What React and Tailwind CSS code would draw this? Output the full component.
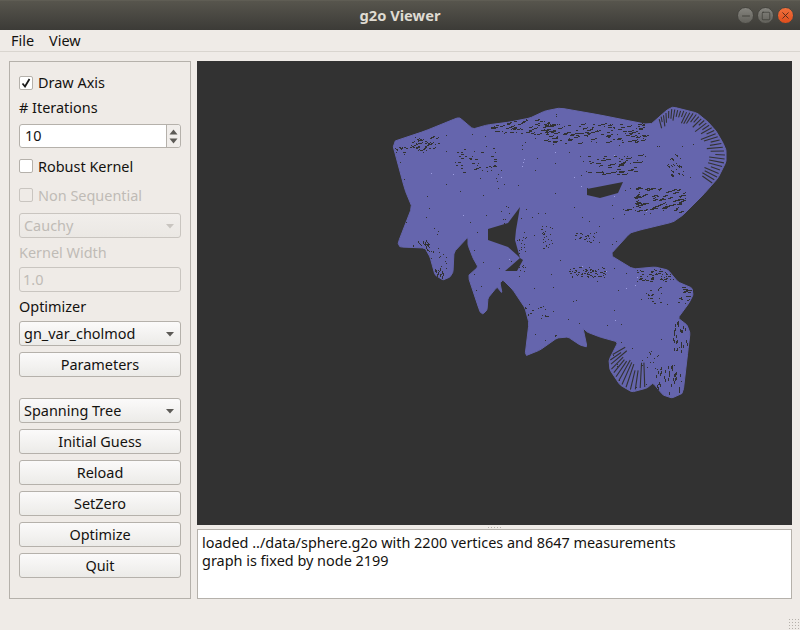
import { Minus, Square, X } from "lucide-react";

const font = "font-['Noto_Sans','Open_Sans',sans-serif] text-[14.45px]";

// graph outline traced from the reference, in page coordinates
const traced = [
  [392, 142], [425, 131], [457, 118], [460, 118], [473, 129], [487, 125], [510, 122], [530, 118], [545, 111], [560, 108],
  [600, 115], [650, 125], [667, 110], [673, 107], [697, 113], [708, 122], [716, 131], [723, 143], [726, 150], [726, 162],
  [718, 178], [703, 195], [683, 215], [673, 222], [640, 230], [630, 233], [610, 255], [633, 269], [655, 267], [668, 270],
  [678, 282], [692, 288], [693, 295], [689, 303], [678, 318], [687, 325], [690, 333], [688, 350], [683, 393], [672, 398],
  [663, 395], [653, 383], [647, 388], [632, 392], [620, 385], [610, 370], [609, 360], [618, 342], [600, 337], [587, 332],
  [583, 328], [587, 347], [580, 345], [568, 337], [557, 338], [540, 350], [525, 356], [529, 323], [525, 308], [513, 290],
  [503, 280], [500, 283], [502, 293], [497, 287], [488, 298], [487, 310], [483, 314], [480, 312], [468, 276], [478, 267],
  [473, 258], [468, 245], [468, 237], [454, 252], [453, 272], [450, 277], [443, 280], [435, 275], [430, 257], [425, 248],
  [400, 247], [398, 243], [412, 207], [405, 190],
];
const holes = [
  [[520, 207], [508, 223], [488, 229], [488, 240], [508, 247], [517, 255], [520, 258], [515, 240], [516, 230]],
  [[520, 258], [505, 271], [517, 271], [523, 260]],
  [[587, 189], [623, 182], [618, 193], [600, 198], [587, 195]],
];

// cut the corners a bit so the edge reads as a curve
function smooth(poly, k = 0.1) {
  return poly.flatMap(([x, y], i) => {
    const [nx, ny] = poly[(i + 1) % poly.length];
    return [
      [x + (nx - x) * k, y + (ny - y) * k],
      [x + (nx - x) * (1 - k), y + (ny - y) * (1 - k)],
    ];
  });
}
const outline = smooth(traced);

function inPoly(poly, x, y) {
  let inside = false;
  for (let i = 0, j = poly.length - 1; i < poly.length; j = i++) {
    const [xi, yi] = poly[i];
    const [xj, yj] = poly[j];
    if (yi > y !== yj > y && x < ((xj - xi) * (y - yi)) / (yj - yi) + xi) inside = !inside;
  }
  return inside;
}
const onGraph = (x, y) => inPoly(outline, x, y) && !holes.some((h) => inPoly(h, x, y));

function makeRandom(seed) {
  return () => {
    seed = (seed + 0x6d2b79f5) | 0;
    let t = Math.imul(seed ^ (seed >>> 15), 1 | seed);
    t = (t + Math.imul(t ^ (t >>> 7), 61 | t)) ^ t;
    return ((t ^ (t >>> 14)) >>> 0) / 4294967296;
  };
}

// [cx, cy, rx, ry, count, max dash length, slope]
const clusters = [
  [593, 133, 50, 10, 110, 6, -0.12], [523, 127, 32, 7, 70, 5, -0.15], [423, 143, 15, 7, 36, 4, -0.3], [400, 150, 6, 5, 14, 2, 0],
  [477, 160, 22, 12, 40, 3, 0.1], [613, 165, 26, 10, 55, 6, -0.1], [653, 200, 30, 12, 70, 7, -0.2], [587, 272, 18, 5, 60, 2, 0],
  [657, 275, 20, 6, 50, 3, 0], [653, 295, 8, 8, 18, 2, 0], [547, 237, 6, 12, 28, 1, 0], [587, 237, 12, 5, 20, 3, 0.3],
  [505, 215, 6, 10, 8, 1, 0], [536, 310, 12, 6, 14, 2, 0], [675, 165, 8, 12, 22, 3, 0.6], [680, 335, 8, 15, 30, 1, 2],
  [686, 296, 8, 12, 24, 5, -0.1], [420, 244, 9, 4, 12, 4, 1.2], [437, 262, 10, 14, 24, 1, 0], [438, 272, 8, 5, 14, 1, 2],
  [522, 250, 4, 22, 24, 1, 0], [668, 378, 12, 14, 34, 1, 2], [650, 360, 8, 10, 12, 1, 0],
];
// [hub x, hub y, from angle, to angle, count, start fraction]
const fans = [
  [668, 152, -105, 35, 36, 0.66], [643, 337, 88, 150, 13, 0.48],
];

function buildSpeckle() {
  const rand = makeRandom(2199);
  let dark = "";
  let spokes = "";
  let light = "";
  const add = (x, y, len, slope) => {
    if (onGraph(x, y) && onGraph(x + len, y + len * slope)) dark += `M${x} ${y}L${x + len} ${y + len * slope}`;
  };
  for (const [cx, cy, rx, ry, count, max, slope] of clusters) {
    for (let i = 0; i < count; i++) {
      const x = Math.round(cx + (rand() * 2 - 1) * rx);
      const y = Math.round(cy + (rand() * 2 - 1) * ry);
      add(x, y + 0.5, 1 + Math.floor(rand() * max), slope);
    }
  }
  for (let i = 0; i < 260; i++) {
    add(Math.round(395 + rand() * 300), Math.round(110 + rand() * 285) + 0.5, 1, 0);
  }
  for (let i = 0; i < 22; i++) {
    const x = Math.round(430 + rand() * 240);
    const y = Math.round(150 + rand() * 200);
    if (onGraph(x, y)) light += `M${x} ${y + 0.5}h1`;
  }
  for (const [hx, hy, from, to, count, start] of fans) {
    for (let i = 0; i < count; i++) {
      const a = ((from + ((to - from) * i) / (count - 1)) * Math.PI) / 180;
      let r = 1;
      while (onGraph(hx + Math.cos(a) * r, hy + Math.sin(a) * r) && r < 80) r++;
      const r1 = r * (start + rand() * 0.16);
      const r2 = r - 2;
      spokes += `M${hx + Math.cos(a) * r1} ${hy + Math.sin(a) * r1}L${hx + Math.cos(a) * r2} ${hy + Math.sin(a) * r2}`;
    }
  }
  return { dark, spokes, light };
}

const toPath = (poly) => "M" + poly.map((p) => p.join(" ")).join("L") + "Z";
const speckle = buildSpeckle();

function GraphView() {
  return (
    <div className="h-[464px] bg-[#323232]">
      <svg width="595" height="464" viewBox="197 61 595 464" className="block">
        <path d={toPath(outline)} fill="#6565ad" stroke="#6565ad" strokeWidth="1" strokeLinejoin="round" />
        {holes.map((h, i) => (
          <path key={i} d={toPath(h)} fill="#323232" />
        ))}
        <path d={speckle.dark} fill="none" stroke="#323232" strokeWidth="1" shapeRendering="crispEdges" />
        <path d={speckle.spokes} fill="none" stroke="#323232" strokeWidth="1.1" />
        <path d={speckle.light} fill="none" stroke="#9c9ce0" strokeWidth="1" shapeRendering="crispEdges" />
      </svg>
    </div>
  );
}

function WinButton({ className, children }) {
  return (
    <div className={`flex h-[17px] w-[17px] items-center justify-center rounded-full border border-[#45443f] ${className}`}>
      {children}
    </div>
  );
}

function TitleBar() {
  return (
    <div className="relative flex h-[30px] items-center justify-center border-t border-[#5f5d54] bg-gradient-to-b from-[#57554d] to-[#3c3b37]">
      <span className="text-[14.7px] font-bold text-[#dfdbd2]">g2o Viewer</span>
      <div className="absolute right-[6px] top-[6px] flex gap-[3px]">
        <WinButton className="bg-gradient-to-b from-[#85847e] to-[#62615b]">
          <Minus size={12} strokeWidth={1.5} className="text-[#34332f]" />
        </WinButton>
        <WinButton className="bg-gradient-to-b from-[#85847e] to-[#62615b]">
          <Square size={10} strokeWidth={1.5} className="text-[#34332f]" />
        </WinButton>
        <WinButton className="bg-gradient-to-b from-[#f0703c] to-[#df4d1b]">
          <X size={11} strokeWidth={2} className="text-[#4b2a1c]" />
        </WinButton>
      </div>
    </div>
  );
}

function Check({ label, checked, disabled, className, labelClass }) {
  return (
    <div className={`flex h-[14px] items-center gap-[5px] ${disabled ? "text-[#bfbbb6]" : "text-[#14120f]"} ${className}`}>
      <div className={`flex h-[14px] w-[14px] items-center justify-center rounded-[2px] border ${disabled ? "border-[#c9c5c0] bg-[#efebe7]" : "border-[#b5b1ab] bg-white"}`}>
        {checked && (
          <svg width="10" height="10" viewBox="0 0 10 10">
            <path d="M1.5 5.5L4 8.5L8.5 1" fill="none" stroke="#1a1a1a" strokeWidth="1.8" />
          </svg>
        )}
      </div>
      <span className={labelClass}>{label}</span>
    </div>
  );
}

function Label({ children, disabled, className }) {
  return <div className={`h-[18px] leading-[18px] ${disabled ? "text-[#bfbbb6]" : "text-[#14120f]"} ${className}`}>{children}</div>;
}

function Combo({ label, disabled, className }) {
  return (
    <div className={`flex h-[25px] items-center justify-between rounded-[3px] border bg-gradient-to-b pl-[4px] pr-[5px] ${disabled ? "border-[#c9c5c0] from-[#f1eeeb] to-[#ebe8e4] text-[#bfbbb6]" : "border-[#b5b1ab] from-[#fbfafa] to-[#ecebe8] text-[#14120f]"} ${className}`}>
      <span>{label}</span>
      <svg width="10" height="6" viewBox="0 0 10 6">
        <path d="M1 1H9L5 5.5Z" fill={disabled ? "#c9c5c0" : "#5c5a56"} />
      </svg>
    </div>
  );
}

function PushButton({ label, className }) {
  return (
    <div className={`flex h-[25px] items-center justify-center rounded-[3px] border border-[#b5b1ab] bg-gradient-to-b from-[#fbfafa] to-[#ecebe8] text-[#14120f] ${className}`}>
      {label}
    </div>
  );
}

function SpinBox() {
  return (
    <div className="mt-[7px] flex h-[24px] rounded-[3px] border border-[#b5b1ab] bg-white text-[#14120f]">
      <div className="flex flex-1 items-center pl-[5px]">10</div>
      <div className="flex w-[14px] flex-col items-center justify-center gap-[3px] rounded-r-[3px] border-l border-[#b5b1ab] bg-[#f1eeeb]">
        <svg width="9" height="6" viewBox="0 0 9 6"><path d="M0.5 5.5H8.5L4.5 0.5Z" fill="#5c5a56" /></svg>
        <svg width="9" height="6" viewBox="0 0 9 6"><path d="M0.5 0.5H8.5L4.5 5.5Z" fill="#5c5a56" /></svg>
      </div>
    </div>
  );
}

function SidePanel() {
  return (
    <div className="h-[538px] w-[182px] border border-[#b5b1ab] px-[9px] pt-[14px]">
      <Check label="Draw Axis" checked />
      <Label className="mt-[9px]"># Iterations</Label>
      <SpinBox />
      <Check label="Robust Kernel" labelClass="pt-[2px]" className="mt-[11px]" />
      <Check label="Non Sequential" labelClass="pt-[2px]" disabled className="mt-[15px]" />
      <Combo label="Cauchy" disabled className="mt-[11px]" />
      <Label disabled className="mt-[6px]">Kernel Width</Label>
      <div className="mt-[5px] flex h-[25px] items-center rounded-[3px] border border-[#c9c5c0] pl-[3px] text-[#bfbbb6]">1.0</div>
      <Label className="mt-[6px]">Optimizer</Label>
      <Combo label="gn_var_cholmod" className="mt-[5px]" />
      <PushButton label="Parameters" className="mt-[6px]" />
      <Combo label="Spanning Tree" className="mt-[21px]" />
      <PushButton label="Initial Guess" className="mt-[6px]" />
      <PushButton label="Reload" className="mt-[6px]" />
      <PushButton label="SetZero" className="mt-[6px]" />
      <PushButton label="Optimize" className="mt-[6px]" />
      <PushButton label="Quit" className="mt-[6px]" />
    </div>
  );
}

function Dots({ className }) {
  return <div className={`bg-[radial-gradient(#b5b1ab_1px,transparent_1px)] bg-[length:3px_3px] ${className}`} />;
}

export default function App() {
  return (
    <div className={`relative h-[630px] w-[800px] overflow-hidden bg-[#efebe7] ${font}`}>
      <TitleBar />
      <div className="flex h-[22px] items-center gap-[15px] border-b border-[#d9d5cf] pl-[11px] text-[#14120f]">
        <span>File</span>
        <span>View</span>
      </div>
      <div className="flex gap-[6px] pl-[9px] pt-[9px]">
        <SidePanel />
        <div className="w-[595px]">
          <GraphView />
          <div className="flex h-[4px] justify-center">
            <Dots className="mt-px h-[2px] w-[16px]" />
          </div>
          <div className="h-[70px] border border-[#b5b1ab] bg-white pl-[4px] pt-[4px] leading-[18px] text-[#14120f]">
            <div>loaded ../data/sphere.g2o with 2200 vertices and 8647 measurements</div>
            <div>graph is fixed by node 2199</div>
          </div>
        </div>
      </div>
      <Dots className="absolute bottom-[1px] right-[1px] h-[11px] w-[11px]" />
    </div>
  );
}
